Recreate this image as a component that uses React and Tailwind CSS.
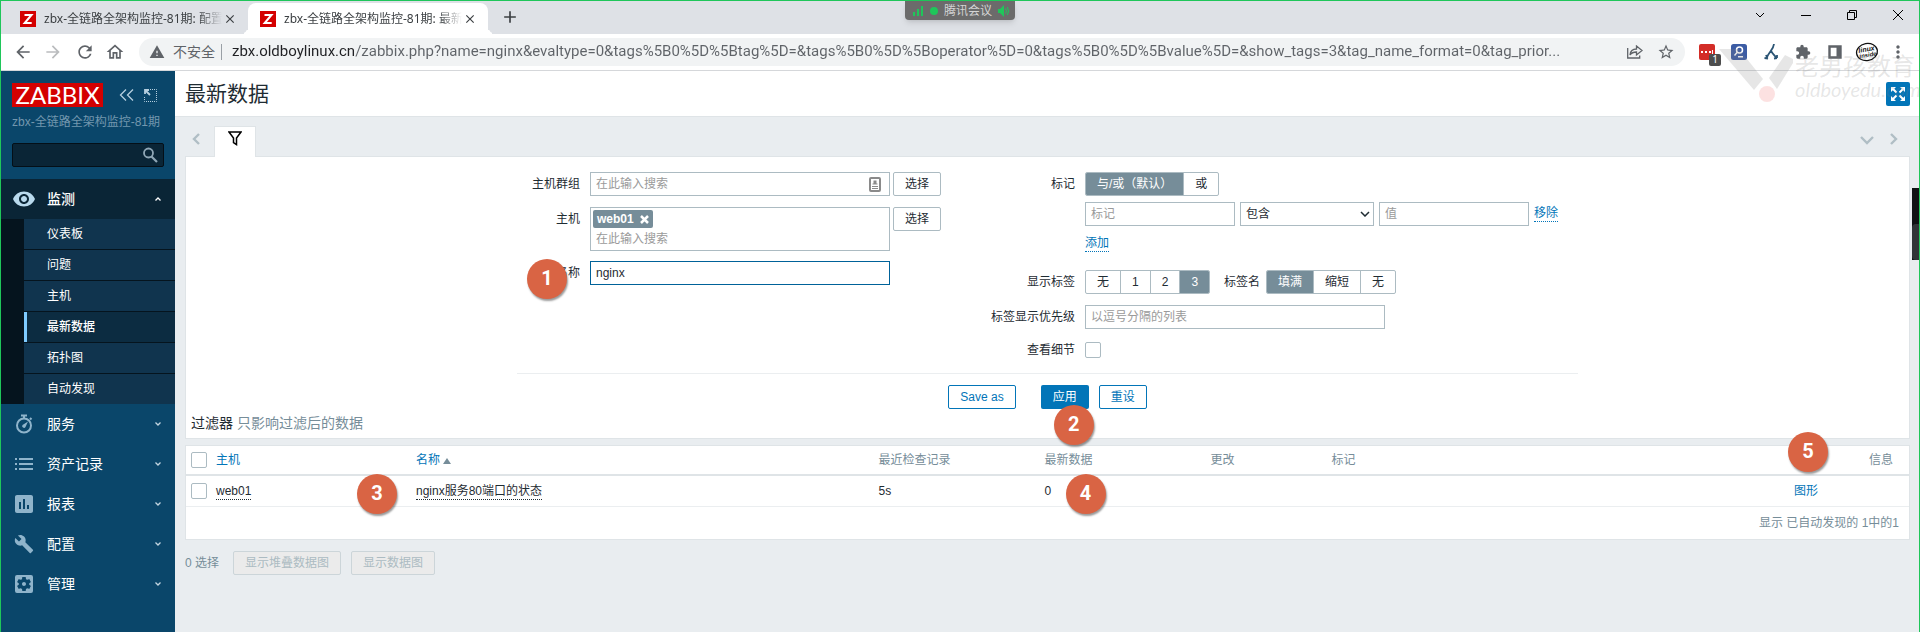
import React from "react";
import {
  MdArrowBack, MdArrowForward, MdRefresh, MdOutlineHome, MdWarning, MdStarOutline, MdExtension, MdMoreVert,
  MdVisibility, MdAssessment, MdBuild, MdSettingsApplications, MdClose, MdAdd,
} from "react-icons/md";

const URL_TEXT =
  "zbx.oldboylinux.cn/zabbix.php?name=nginx&evaltype=0&tags%5B0%5D%5Btag%5D=&tags%5B0%5D%5Boperator%5D=0&tags%5B0%5D%5Bvalue%5D=&show_tags=3&tag_name_format=0&tag_prior...";

function Chevron({ className, d = "M1 1l4 4 4-4", w = 10, h = 6, stroke = 2 }) {
  return (
    <svg className={className} width={w} height={h} viewBox={`0 0 ${w} ${h}`} fill="none" stroke="currentColor" strokeWidth={stroke}>
      <path d={d} />
    </svg>
  );
}

function Badge({ n, className }) {
  return (
    <span
      className={`absolute z-10 flex size-10 items-center justify-center rounded-full bg-[#d96444] pb-0.5 font-['Roboto',sans-serif] text-xl font-bold text-white shadow-[1px_2px_2px_rgba(0,0,0,0.4)] ${className}`}
    >
      {n}
    </span>
  );
}

function BrowserTab({ title, active }) {
  return (
    <div
      className={`relative flex w-60 items-center pl-3 pr-2.5 ${
        active
          ? "rounded-t-lg bg-white before:absolute before:-left-2 before:bottom-0 before:size-2 before:rounded-br-lg before:shadow-[4px_4px_0_white] after:absolute after:-right-2 after:bottom-0 after:size-2 after:rounded-bl-lg after:shadow-[-4px_4px_0_white]"
          : ""
      }`}
    >
      <svg width="16" height="16" viewBox="0 0 16 16" className="shrink-0">
        <rect width="16" height="16" fill="#d40000" />
        <path d="M4.5 4h7L4.7 12h7" fill="none" stroke="#fff" strokeWidth="2" />
      </svg>
      <span className="ml-2 flex-1 overflow-hidden whitespace-nowrap text-xs text-[#3c4043] [mask-image:linear-gradient(to_right,black_155px,transparent_178px)]">
        {title}
      </span>
      <button aria-label="关闭标签页" className="flex size-4 items-center justify-center text-[#3c4043]">
        <MdClose size={14} />
      </button>
    </div>
  );
}

function Browser() {
  return (
    <header className="relative font-['Noto_Sans','Noto_Sans_CJK_SC',sans-serif]">
      <div className="flex h-[33px] justify-between bg-[#dee1e6]">
        <div className="flex pl-[7px] pt-0.5">
          <BrowserTab title="zbx-全链路全架构监控-81期: 配置图形" />
          <BrowserTab title="zbx-全链路全架构监控-81期: 最新数据" active />
          <button aria-label="新标签页" className="ml-3 pb-1 text-[#3c4043]">
            <MdAdd size={20} />
          </button>
        </div>
        <div className="flex items-center gap-9 pb-1.5 pr-4 text-black">
          <button aria-label="标签列表"><Chevron stroke={1} /></button>
          <button aria-label="最小化"><svg width="10" height="10"><path d="M0 5.500h10" stroke="#000" /></svg></button>
          <button aria-label="还原">
            <svg width="10" height="10" fill="none" stroke="#000">
              <path d="M.5 2.500h7v7h-7zM2.500 2.500v-2h7v7h-2" />
            </svg>
          </button>
          <button aria-label="关闭"><svg width="10" height="10" stroke="#000"><path d="M0 0l10 10M10 0L0 10" /></svg></button>
        </div>
      </div>
      <div className="absolute left-1/2 top-0 flex h-[19px] w-[110px] -translate-x-1/2 items-center gap-1.5 rounded-b bg-[#6b6b6b] px-2 text-xs text-[#d4d4d4] shadow-md">
        <svg width="11" height="10" fill="#1fc65a" className="shrink-0">
          <path d="M0 6h2v4H0zM4 3h2v7H4zM8 0h2v10H8z" />
        </svg>
        <i className="size-2 shrink-0 rounded-full bg-[#1fc65a]" />
        <span className="whitespace-nowrap">腾讯会议</span>
        <svg width="11" height="12" viewBox="0 0 11 12" className="shrink-0">
          <path d="M0 4h2l4-4v12L2 8H0z" fill="#1fc65a" />
          <path d="M7.500 3.500q2 2.500 0 5M9.300 2q2.600 4 0 8" fill="none" stroke="#1fc65a" />
        </svg>
      </div>
      <div className="flex h-[37px] items-center border-b border-[#d5d7da] bg-white pl-3 pr-[11px] text-[#5f6368]">
        <div className="flex items-center gap-2.5">
          <button aria-label="后退"><MdArrowBack size={20} /></button>
          <button aria-label="前进" className="text-[#babcbe]"><MdArrowForward size={20} /></button>
          <button aria-label="刷新" className="ml-0.5"><MdRefresh size={20} /></button>
          <button aria-label="主页"><MdOutlineHome size={20} /></button>
        </div>
        <div className="ml-3.5 flex h-7 flex-1 items-center rounded-full bg-[#f1f3f4] px-2.5">
          <MdWarning size={16} className="shrink-0" />
          <span className="ml-2 whitespace-nowrap text-sm">不安全</span>
          <i className="ml-1.5 h-4 w-px bg-[#9aa0a6]" />
          <input
            aria-label="地址"
            defaultValue={URL_TEXT}
            className="ml-2.5 min-w-0 flex-1 bg-[linear-gradient(to_right,#202124_123px,#5f6368_123px)] bg-clip-text font-['Roboto',sans-serif] text-[15px] text-transparent outline-none"
          />
          <button aria-label="分享" className="ml-3">
            <svg width="16" height="14" viewBox="0 0 16 14" fill="none" stroke="currentColor" strokeWidth="1.300">
              <path d="M.7 3v10h12v-2.500M3 10q.5-6 6.500-6V1l5.500 4.500-5.500 4.400V7Q5 7 3 10z" />
            </svg>
          </button>
          <button aria-label="收藏" className="ml-3.5"><MdStarOutline size={18} /></button>
        </div>
        <div className="ml-3.5 flex items-center gap-4">
          <span className="relative flex size-4 items-center justify-center rounded-xs bg-[#d32d27]">
            <svg width="12" height="4" fill="#fff"><path d="M0 1h2v2H0zM4 1h2v2H4zM8 1h2v2H8zM11 0h1v4h-1z" /></svg>
            <span className="absolute left-2.5 top-2.5 flex h-3 w-3 items-center justify-center rounded-xs bg-[#4d4d4d] text-[10px] text-white">1</span>
          </span>
          <svg width="16" height="16">
            <rect width="16" height="16" rx="2.500" fill="#3c5ca4" />
            <circle cx="8.500" cy="6" r="3" fill="none" stroke="#fff" strokeWidth="1.500" />
            <path d="M6.500 8l-3 3.500M7 12.800h5" stroke="#fff" strokeWidth="1.400" />
          </svg>
          <svg width="16" height="16" fill="none" stroke="#2b5575" strokeWidth="1.800">
            <path d="M11 0c-.5 5-4 7-7 13M8 6.500c1 3 3 4 5 7M1.500 14l3.500.5M3 11l1.500 3.500M11 14.500l3-.5M14 11v3" />
          </svg>
          <MdExtension size={16} />
          <svg width="16" height="16"><path d="M2.500 2.500h11v11h-11z" fill="#fff" stroke="#5f6368" strokeWidth="2.400" /><path d="M9.500 2h4v12h-4z" fill="#5f6368" /></svg>
          <svg width="24" height="22" viewBox="0 0 24 22" className="-ml-1">
            <g transform="rotate(-10 12 11)">
              <ellipse cx="12" cy="11" rx="10.500" ry="8.500" fill="#fff" stroke="#111" strokeWidth="1.300" />
              <text x="12" y="10.500" textAnchor="middle" fontSize="7" fontWeight="700" fontStyle="italic" fontFamily="Liberation Sans" fill="#111">linux</text>
              <text x="12.500" y="16" textAnchor="middle" fontSize="6" fontWeight="700" fontStyle="italic" fontFamily="Liberation Sans" fill="#111">inside</text>
            </g>
          </svg>
          <button aria-label="更多" className="-ml-[7px]"><MdMoreVert size={20} /></button>
        </div>
      </div>
    </header>
  );
}

const StopwatchIcon = () => (
  <svg width="24" height="24" viewBox="0 0 24 24" fill="none" stroke="currentColor" strokeWidth="2">
    <circle cx="12" cy="13.500" r="7" />
    <path d="M9 3.500h6M12 4v2.500M18 6l1.500 1.500" />
    <path d="M16 9.500l-2.500 5.500a1.800 1.800 0 0 1-3-2z" fill="currentColor" stroke="none" />
  </svg>
);
const ListIcon = () => (
  <svg width="24" height="24" viewBox="0 0 24 24" fill="currentColor">
    <path d="M3 6h2v2H3zM7 6h14v2H7zM3 11h2v2H3zM7 11h14v2H7zM3 16h2v2H3zM7 16h14v2H7z" />
  </svg>
);

const SUBMENU = ["仪表板", "问题", "主机", "最新数据", "拓扑图", "自动发现"];
const MENU = [
  ["服务", <StopwatchIcon />],
  ["资产记录", <ListIcon />],
  ["报表", <MdAssessment size={24} />],
  ["配置", <MdBuild size={20} />],
  ["管理", <MdSettingsApplications size={24} />],
];

function Sidebar() {
  return (
    <aside className="w-[174px] shrink-0 bg-[#0a466a]">
      <div className="flex items-center px-[11px] pt-3 text-[#b6cfdf]">
        <a href="#home" className="flex h-6 w-[91px] items-center justify-center bg-[#d40000] font-['Lato',sans-serif] text-2xl text-white">ZABBIX</a>
        <button aria-label="收起侧栏" className="ml-4"><Chevron w={15} h={12} stroke={1.3} d="M7 .5L1.500 6 7 11.500M14 .5L8.500 6 14 11.500" /></button>
        <button aria-label="隐藏侧栏" className="ml-2.5">
          <svg width="13" height="13" fill="none" stroke="currentColor">
            <path d="M6 .5h6.500v12H.5V7" strokeDasharray="1 1" />
            <path d="M1 5V1h4M1 1l5 5" strokeWidth="1.800" />
          </svg>
        </button>
      </div>
      <p className="px-[11px] pt-1.5 text-xs leading-[18px] text-[#7397ae]">zbx-全链路全架构监控-81期</p>
      <div className="relative mx-[11px] mb-3 mt-3">
        <input aria-label="搜索" className="block h-6 w-full rounded-xs border border-[#040f17] bg-[#0a2536] px-2 pr-6 text-xs text-white outline-none" />
        <svg width="16" height="16" viewBox="0 0 16 16" fill="none" stroke="#8fa6b5" strokeWidth="1.800" className="absolute right-1.5 top-1">
          <circle cx="6.500" cy="6" r="4.500" />
          <path d="M9.500 9.500l5.500 5.500" strokeWidth="2.200" />
        </svg>
      </div>
      <nav>
        <button className="flex h-10 w-full items-center bg-[#0a2536] pl-[11px] pr-3.5 text-sm font-medium text-white">
          <span className="flex w-6 justify-center text-[#b9daee]"><MdVisibility size={24} /></span>
          <span className="ml-[11px]">监测</span>
          <Chevron className="ml-auto" w={6} h={4} stroke={1.3} d="M.5 3.500L3 1l2.500 2.500" />
        </button>
        <ul className="divide-y divide-[#05141e] bg-[#05141e] pl-[23px]">
          {SUBMENU.map((t) => (
            <li key={t}>
              <a
                href="#menu"
                className={`flex h-[30px] items-center border-l-[3px] pl-5 text-xs text-white ${
                  t === "最新数据" ? "border-[#7ecbff] bg-[#0c2c41] font-medium" : "border-[#10344e] bg-[#10344e]"
                }`}
              >
                {t}
              </a>
            </li>
          ))}
        </ul>
        {MENU.map(([t, icon]) => (
          <button key={t} className="flex h-10 w-full items-center pl-[11px] pr-3.5 text-sm text-white">
            <span className="flex w-6 justify-center text-[#8fb4cb]">{icon}</span>
            <span className="ml-[11px]">{t}</span>
            <Chevron className="ml-auto text-[#c3d5e0]" w={6} h={4} stroke={1.3} d="M.5 .5L3 3l2.500-2.500" />
          </button>
        ))}
      </nav>
    </aside>
  );
}

const FIELD = "h-6 border border-[#acbbc2] bg-white px-[5px] text-xs text-[#1f2c33] outline-none placeholder:text-[#9a9a9a]";
const CHECK = "block size-4 shrink-0 appearance-none rounded-xs border border-[#acbbc2] bg-white";
const LINK = "border-b border-dotted leading-[15px]";
const LABEL = "box-content w-[63px] pr-2.5 text-right leading-6";

function SelectButton() {
  return <button className="h-6 w-12 rounded-xs border border-[#acbbc2] bg-white text-[#1f2c33]">选择</button>;
}

function Segments({ name, items, value }) {
  return (
    <div role="radiogroup" aria-label={name} className="flex h-6 divide-x divide-[#acbbc2] overflow-hidden rounded-xs border border-[#acbbc2]">
      {items.map((t) => (
        <label key={t} className="relative flex items-center whitespace-nowrap px-[11px] has-checked:bg-[#768d99] has-checked:text-white">
          <input type="radio" name={name} defaultChecked={t === value} className="sr-only" />
          {t}
        </label>
      ))}
    </div>
  );
}

function Filter() {
  return (
    <section className="relative border border-[#dfe4e7] bg-white">
      <form className="mx-auto w-full max-w-[1061px]" onSubmit={(e) => e.preventDefault()}>
        <div className="flex justify-between pb-3.5 pt-[15px]">
          <div className="flex flex-col gap-2.5">
            <div className="flex">
              <label htmlFor="groups" className={LABEL}>主机群组</label>
              <div className="relative">
                <input id="groups" placeholder="在此输入搜索" className={`${FIELD} block w-[300px]`} />
                <svg width="12" height="15" viewBox="0 0 12 15" className="absolute right-[9px] top-[5px]">
                  <rect x="1" y="1" width="10" height="13" rx="1" fill="#fff" stroke="#8a8a8a" strokeWidth="2" />
                  <path d="M4.500 3.500h3v3h1v1h-5v-1h1zM3 9h6v1H3zM3 11h6v1H3z" fill="#8a8a8a" />
                </svg>
              </div>
              <span className="ml-[3px] flex"><SelectButton /></span>
            </div>
            <div className="mt-px flex">
              <label htmlFor="hosts" className={LABEL}>主机</label>
              <div className="w-[300px] border border-[#acbbc2] px-0.5 pt-0.5">
                <span className="flex h-[18px] w-15 items-center justify-between rounded-xs bg-[#768d99] px-1 font-bold text-white">
                  web01
                  <button aria-label="移除 web01">
                    <svg width="9" height="9" stroke="#fff" strokeWidth="2.500"><path d="M1 1l7 7M8 1L1 8" /></svg>
                  </button>
                </span>
                <input id="hosts" placeholder="在此输入搜索" className="block h-[22px] w-full px-[3px] outline-none placeholder:text-[#9a9a9a]" />
              </div>
              <span className="ml-[3px] flex items-start"><SelectButton /></span>
            </div>
            <div className="relative flex">
              <label htmlFor="name" className={LABEL}>名称</label>
              <input id="name" defaultValue="nginx" className="h-6 w-[300px] border border-[#006299] px-[5px] text-xs outline-none" />
              <Badge n="1" className="-top-0.5 left-2.5" />
            </div>
          </div>
          <div className="grid grid-cols-[max-content_1fr] items-start gap-x-2.5 pr-5 text-right">
            <span className="leading-6">标记</span>
            <div className="flex flex-col items-start gap-1.5">
              <Segments name="标记" items={["与/或（默认）", "或"]} value="与/或（默认）" />
              <div className="flex items-center gap-[5px]">
                <input aria-label="标记" placeholder="标记" className={`${FIELD} w-[150px]`} />
                <span className="relative">
                  <select aria-label="运算符" className={`${FIELD} block w-[134px] appearance-none`}>
                    <option>包含</option>
                  </select>
                  <Chevron className="pointer-events-none absolute right-1 top-[9px]" stroke={1.5} />
                </span>
                <input aria-label="值" placeholder="值" className={`${FIELD} w-[150px]`} />
                <button className={`${LINK} text-[#0275b8]`}>移除</button>
              </div>
              <button className={`${LINK} mt-1 text-[#0275b8]`}>添加</button>
            </div>
            <span className="mt-[18px] leading-6">显示标签</span>
            <div className="mt-[18px] flex items-center">
              <Segments name="显示标签" items={["无", "1", "2", "3"]} value="3" />
              <span className="ml-3.5 mr-1.5">标签名</span>
              <Segments name="标签名" items={["填满", "缩短", "无"]} value="填满" />
            </div>
            <label htmlFor="priority" className="mt-[11px] leading-6">标签显示优先级</label>
            <input id="priority" placeholder="以逗号分隔的列表" className={`${FIELD} mt-[11px] w-[300px]`} />
            <label htmlFor="details" className="mt-3 leading-[18px]">查看细节</label>
            <input id="details" type="checkbox" className={`${CHECK} mt-[13px]`} />
          </div>
        </div>
        <div className="flex items-start justify-center border-t border-[#ebeef0] pt-[11px]">
          <button className="h-6 rounded-xs border border-[#0275b8] px-[11px] text-[#0275b8]">Save as</button>
          <span className="relative ml-[25px]">
            <button className="block h-6 w-12 rounded-xs bg-[#0275b8] text-white">应用</button>
            <Badge n="2" className="left-[13px] top-5" />
          </span>
          <button className="ml-2.5 h-6 w-12 rounded-xs border border-[#0275b8] text-[#0275b8]">重设</button>
        </div>
      </form>
      <p className="px-[5px] pb-[5px] pt-1 text-sm leading-5 text-[#768d99]">
        <span className="text-[#1f2c33]">过滤器</span> 只影响过滤后的数据
      </p>
    </section>
  );
}

function DataTable() {
  const th = "relative h-7 px-[5px] text-left font-normal";
  const td = "relative h-[30px] px-[5px]";
  return (
    <div className="mt-1.5 border border-[#dfe4e7] bg-white">
      <table className="w-full table-fixed border-separate border-spacing-0">
        <colgroup>
          <col className="w-[25px]" /><col className="w-[200px]" /><col /><col className="w-[166px]" /><col className="w-[166px]" />
          <col className="w-[121px]" /><col /><col className="w-[75px]" /><col className="w-[45px]" />
        </colgroup>
        <thead className="text-[#768d99] [&_th]:border-b-2 [&_th]:border-[#dfe4e7] [&_th]:box-content">
          <tr>
            <th className={th}><input type="checkbox" aria-label="全选" className={CHECK} /></th>
            <th className={th}><a href="#host" className="text-[#0275b8]">主机</a></th>
            <th className={th}>
              <a href="#name" className="flex items-center gap-[3px] text-[#0275b8]">
                名称<svg width="8" height="6" className="mt-0.5"><path d="M4 0l4 6H0z" fill="#768d99" /></svg>
              </a>
            </th>
            <th className={th}>最近检查记录</th>
            <th className={th}>最新数据</th>
            <th className={th}>更改</th>
            <th className={th}>标记</th>
            <th className={th} aria-label="操作"><Badge n="5" className="-left-px -top-3.5" /></th>
            <th className={th}>信息</th>
          </tr>
        </thead>
        <tbody>
          <tr className="[&>td]:border-b [&>td]:border-[#ebeef0] [&>td]:box-content">
            <td className={td}><input type="checkbox" aria-label="web01" className={CHECK} /></td>
            <td className={td}><a href="#web01" className={`${LINK} inline-block`}>web01</a><Badge n="3" className="-top-0.5 left-[146px]" /></td>
            <td className={td}><a href="#item" className={`${LINK} inline-block`}>nginx服务80端口的状态</a></td>
            <td className={td}>5s</td>
            <td className={td}>0<Badge n="4" className="-top-0.5 left-[26px]" /></td>
            <td className={td} />
            <td className={td} />
            <td className={td}><a href="#graph" className="text-[#0275b8]">图形</a></td>
            <td className={td} />
          </tr>
        </tbody>
        <tfoot>
          <tr><td colSpan={9} className="h-8 px-2.5 text-right text-[#768d99]">显示 已自动发现的 1中的1</td></tr>
        </tfoot>
      </table>
    </div>
  );
}

function Watermark() {
  return (
    <div className="pointer-events-none absolute right-0 top-11 z-20 h-16 w-[200px] overflow-hidden text-[#808080]/20">
      <svg width="80" height="60" className="absolute left-0 top-0">
        <path d="M0 4h20l24 30-9 11z" fill="currentColor" />
        <path d="M50 33l16-23 8 4v4L58 44z" fill="currentColor" />
        <circle cx="48" cy="49" r="8" fill="#fbdcdc" fillOpacity=".85" />
      </svg>
      <div className="pl-[76px] pt-2">
        <div className="whitespace-nowrap font-['Noto_Sans_CJK_SC',sans-serif] text-2xl leading-6">老男孩教育</div>
        <div className="whitespace-nowrap font-['Lato',sans-serif] text-xl italic leading-6">oldboyedu.com</div>
      </div>
    </div>
  );
}

export default function App() {
  const disabled = "h-6 rounded-xs border border-[#ccd5d9] bg-[#ebebeb] px-[11px] text-[#acbbc2]";
  return (
    <div className="relative flex min-h-screen flex-col border-x border-t border-[#1fc65a] font-['Liberation_Sans','Noto_Sans_CJK_SC',sans-serif] text-xs text-[#1f2c33]">
      <Browser />
      <div className="flex flex-1 bg-[#e9edf0]">
        <Sidebar />
        <main className="min-w-0 flex-1">
          <div className="flex h-[46px] items-center justify-between border-b border-[#dfe4e7] bg-white pl-2.5 pr-[9px]">
            <h1 className="text-[21px] leading-7">最新数据</h1>
            <button aria-label="全屏" className="flex size-6 items-center justify-center rounded-xs bg-[#0275b8]">
              <svg width="14" height="14" viewBox="0 0 14 14" fill="#fff" stroke="#fff">
                <path d="M0 0h5L0 5zM14 0v5L9 0zM0 14V9l5 5zM14 14H9l5-5z" stroke="none" />
                <path d="M2 2l3.500 3.500M12 2L8.500 5.500M2 12l3.500-3.500M12 12L8.500 8.500" strokeWidth="2" />
              </svg>
            </button>
          </div>
          <div className="pl-2.5 pr-[9px]">
            <div className="relative z-10 -mb-px flex h-10 items-end text-[#b0bec5]">
              <button aria-label="上一个" className="mb-3 ml-[7px]"><Chevron w={8} h={12} stroke={2.4} d="M7 1L2 6l5 5" /></button>
              <button aria-label="过滤器" className="ml-3.5 flex h-[31px] w-[42px] justify-center border border-b-0 border-[#dfe4e7] bg-white pt-1">
                <svg width="14" height="15" fill="none" stroke="#000" strokeWidth="1.500"><path d="M1 1h12L8.500 7v6.500l-3-2V7z" /></svg>
              </button>
              <button aria-label="展开" className="mb-3 ml-auto"><Chevron w={14} h={9} stroke={2.4} d="M1 1l6 6 6-6" /></button>
              <button aria-label="下一个" className="mb-3 ml-4 mr-3"><Chevron w={8} h={12} stroke={2.4} d="M1 1l5 5-5 5" /></button>
            </div>
            <Filter />
            <DataTable />
            <div className="flex items-center py-[11px] text-[#768d99]">
              <span className="mr-3.5">0 选择</span>
              <button disabled className={disabled}>显示堆叠数据图</button>
              <button disabled className={`${disabled} ml-2.5`}>显示数据图</button>
            </div>
          </div>
        </main>
      </div>
      <div className="absolute right-0 top-[187px] flex h-[72px] w-[7px] flex-col justify-end bg-[#101214]">
        <div className="h-9 rounded-l bg-[#303437]" />
      </div>
      <Watermark />
    </div>
  );
}
